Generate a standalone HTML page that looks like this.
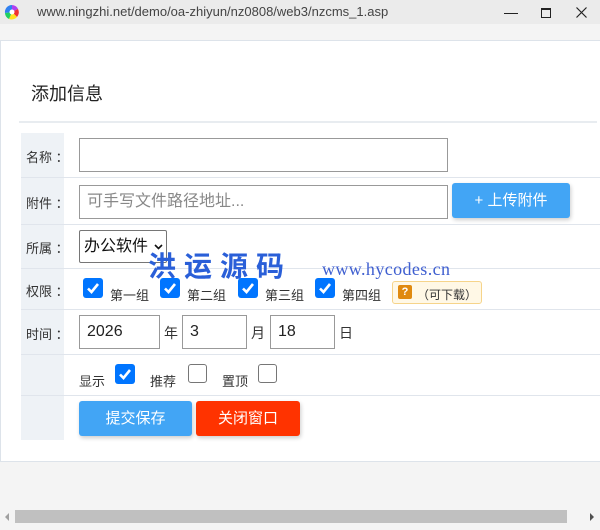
<!DOCTYPE html>
<html><head><meta charset="utf-8"><style>
*{margin:0;padding:0;box-sizing:border-box}
body{width:600px;height:530px;overflow:hidden;background:#f4f4f4;font-family:"Liberation Sans","Noto Sans CJK SC",sans-serif;position:relative;color:#333}
.a{position:absolute}
.t{font-size:13px;color:#333}
.inp{position:absolute;border:1px solid #999;background:#fff;font-size:16px;color:#222;padding-left:7px;line-height:32px}
.cb{position:absolute;width:20px;height:20px;border-radius:3px;background:#0075ff}
.cb svg{position:absolute;left:2px;top:2px}
.ucb{position:absolute;width:19px;height:19px;border:1.5px solid #767676;border-radius:3px;background:#fff}
.line{position:absolute;left:21px;width:579px;height:1px;background:#e0e5ec}
</style></head><body>
<div class="a" style="left:0;top:0;width:600px;height:24px;background:#ebebeb"></div>
<svg class="a" style="left:4px;top:4px" width="16" height="16" viewBox="0 0 16 16">
<path d="M8 8L8 1A7 7 0 0 1 14 5Z" fill="#b040f0"/><path d="M8 8L14 5A7 7 0 0 1 13 13Z" fill="#f03030"/><path d="M8 8L13 13A7 7 0 0 1 5 15Z" fill="#ffe020"/><path d="M8 8L5 15A7 7 0 0 1 1 9Z" fill="#20d060"/><path d="M8 8L1 9A7 7 0 0 1 8 1Z" fill="#3080f0"/><circle cx="8" cy="8" r="2.5" fill="#fff"/></svg>
<div class="a" style="left:37px;top:4px;font-size:13px;color:#444">www.ningzhi.net/demo/oa-zhiyun/nz0808/web3/nzcms_1.asp</div>
<div class="a" style="left:504px;top:13px;width:14px;height:1px;background:#222"></div>
<div class="a" style="left:541px;top:8px;width:10px;height:10px;border:1.5px solid #222;border-top-width:2px"></div>
<svg class="a" style="left:576px;top:7px" width="11" height="11" viewBox="0 0 11 11"><path d="M0.5 0.5L10.5 10.5M10.5 0.5L0.5 10.5" stroke="#222" stroke-width="1.2"/></svg>
<div class="a" style="left:0;top:40px;width:600px;height:422px;background:#fff;border:1px solid #dde3ea;border-right:none"></div>
<div class="a" style="left:31px;top:80px;font-size:18px;color:#222">添加信息</div>
<div class="a" style="left:19px;top:121px;width:578px;height:2px;background:#e8ecf0"></div>
<div class="a" style="left:21px;top:133px;width:43px;height:307px;background:#eef2f6"></div>
<div class="line" style="top:177px"></div><div class="line" style="top:224px"></div><div class="line" style="top:268px"></div><div class="line" style="top:309px"></div><div class="line" style="top:354px"></div><div class="line" style="top:395px"></div>
<div class="a t" style="left:26px;top:147px">名称 ：</div>
<div class="inp" style="left:79px;top:138px;width:369px;height:34px"></div>
<div class="a t" style="left:26px;top:193px">附件 ：</div>
<div class="inp" style="left:79px;top:185px;width:369px;height:34px;color:#888">可手写文件路径地址...</div>
<div class="a" style="left:452px;top:183px;width:118px;height:35px;background:#42a5f5;border-radius:3px;box-shadow:1px 2px 4px rgba(0,0,0,.2);color:#fff;font-size:15px;text-align:center;line-height:35px">+ 上传附件</div>
<div class="a t" style="left:26px;top:238px">所属 ：</div>
<div class="a" style="left:79px;top:230px;width:88px;height:33px;border:1px solid #767676;border-radius:2px;font-size:16px;color:#111;padding-left:4px;line-height:31px;background:#fff">办公软件<svg style="position:absolute;left:74px;top:13px" width="9" height="6" viewBox="0 0 9 6"><path d="M1 1L4.5 4.5L8 1" stroke="#111" stroke-width="1.6" fill="none"/></svg></div>
<div class="a" style="left:148px;top:245px;font-size:28px;font-weight:bold;color:#2a5fd8;letter-spacing:8px;white-space:nowrap">洪运源码</div>
<div class="a" style="left:322px;top:259px;font-family:'Liberation Serif',serif;font-size:18px;color:#3f5fd0;letter-spacing:0.4px">www.hycodes.cn</div>
<div class="a t" style="left:26px;top:281px">权限 ：</div>
<div class="cb" style="left:83px;top:278px"><svg width="16" height="16" viewBox="0 0 16 16"><path d="M3 8.5L6.5 12L13 4" stroke="#fff" stroke-width="2.6" fill="none"/></svg></div>
<div class="a t" style="left:110px;top:285px">第一组</div>
<div class="cb" style="left:160px;top:278px"><svg width="16" height="16" viewBox="0 0 16 16"><path d="M3 8.5L6.5 12L13 4" stroke="#fff" stroke-width="2.6" fill="none"/></svg></div>
<div class="a t" style="left:187px;top:285px">第二组</div>
<div class="cb" style="left:238px;top:278px"><svg width="16" height="16" viewBox="0 0 16 16"><path d="M3 8.5L6.5 12L13 4" stroke="#fff" stroke-width="2.6" fill="none"/></svg></div>
<div class="a t" style="left:265px;top:285px">第三组</div>
<div class="cb" style="left:315px;top:278px"><svg width="16" height="16" viewBox="0 0 16 16"><path d="M3 8.5L6.5 12L13 4" stroke="#fff" stroke-width="2.6" fill="none"/></svg></div>
<div class="a t" style="left:342px;top:285px">第四组</div>
<div class="a" style="left:392px;top:281px;width:90px;height:23px;border:1px solid #f6d48a;background:#fff8e6;border-radius:3px"></div>
<div class="a" style="left:398px;top:285px;width:14px;height:14px;background:#e08a10;border-radius:2px;color:#fff;font-size:11px;font-weight:bold;text-align:center;line-height:14px">?</div>
<div class="a" style="left:417px;top:286px;font-size:12px;color:#333">（可下载）</div>
<div class="a t" style="left:26px;top:324px">时间 ：</div>
<div class="inp" style="left:79px;top:315px;width:81px;height:34px">2026</div>
<div class="a t" style="left:164px;top:323px;font-size:14px">年</div>
<div class="inp" style="left:182px;top:315px;width:65px;height:34px">3</div>
<div class="a t" style="left:251px;top:323px;font-size:14px">月</div>
<div class="inp" style="left:270px;top:315px;width:65px;height:34px">18</div>
<div class="a t" style="left:339px;top:323px;font-size:14px">日</div>
<div class="a t" style="left:79px;top:371px">显示</div>
<div class="cb" style="left:115px;top:364px"><svg width="16" height="16" viewBox="0 0 16 16"><path d="M3 8.5L6.5 12L13 4" stroke="#fff" stroke-width="2.6" fill="none"/></svg></div>
<div class="a t" style="left:150px;top:371px">推荐</div>
<div class="ucb" style="left:188px;top:364px"></div>
<div class="a t" style="left:222px;top:371px">置顶</div>
<div class="ucb" style="left:258px;top:364px"></div>
<div class="a" style="left:79px;top:401px;width:113px;height:35px;background:#42a5f5;border-radius:3px;box-shadow:1px 2px 4px rgba(0,0,0,.2);color:#fff;font-size:15px;text-align:center;line-height:35px">提交保存</div>
<div class="a" style="left:196px;top:401px;width:104px;height:35px;background:#ff3300;border-radius:3px;box-shadow:1px 2px 4px rgba(0,0,0,.2);color:#fff;font-size:15px;text-align:center;line-height:35px">关闭窗口</div>
<div class="a" style="left:0;top:510px;width:600px;height:14px;background:#f4f4f4"></div>
<div class="a" style="left:15px;top:510px;width:552px;height:13px;background:#c0c0c0"></div>
<div class="a" style="left:5px;top:513px;width:0;height:0;border-top:4px solid transparent;border-bottom:4px solid transparent;border-right:4px solid #a0a0a0"></div>
<div class="a" style="left:590px;top:513px;width:0;height:0;border-top:4px solid transparent;border-bottom:4px solid transparent;border-left:4px solid #505050"></div>
</body></html>
